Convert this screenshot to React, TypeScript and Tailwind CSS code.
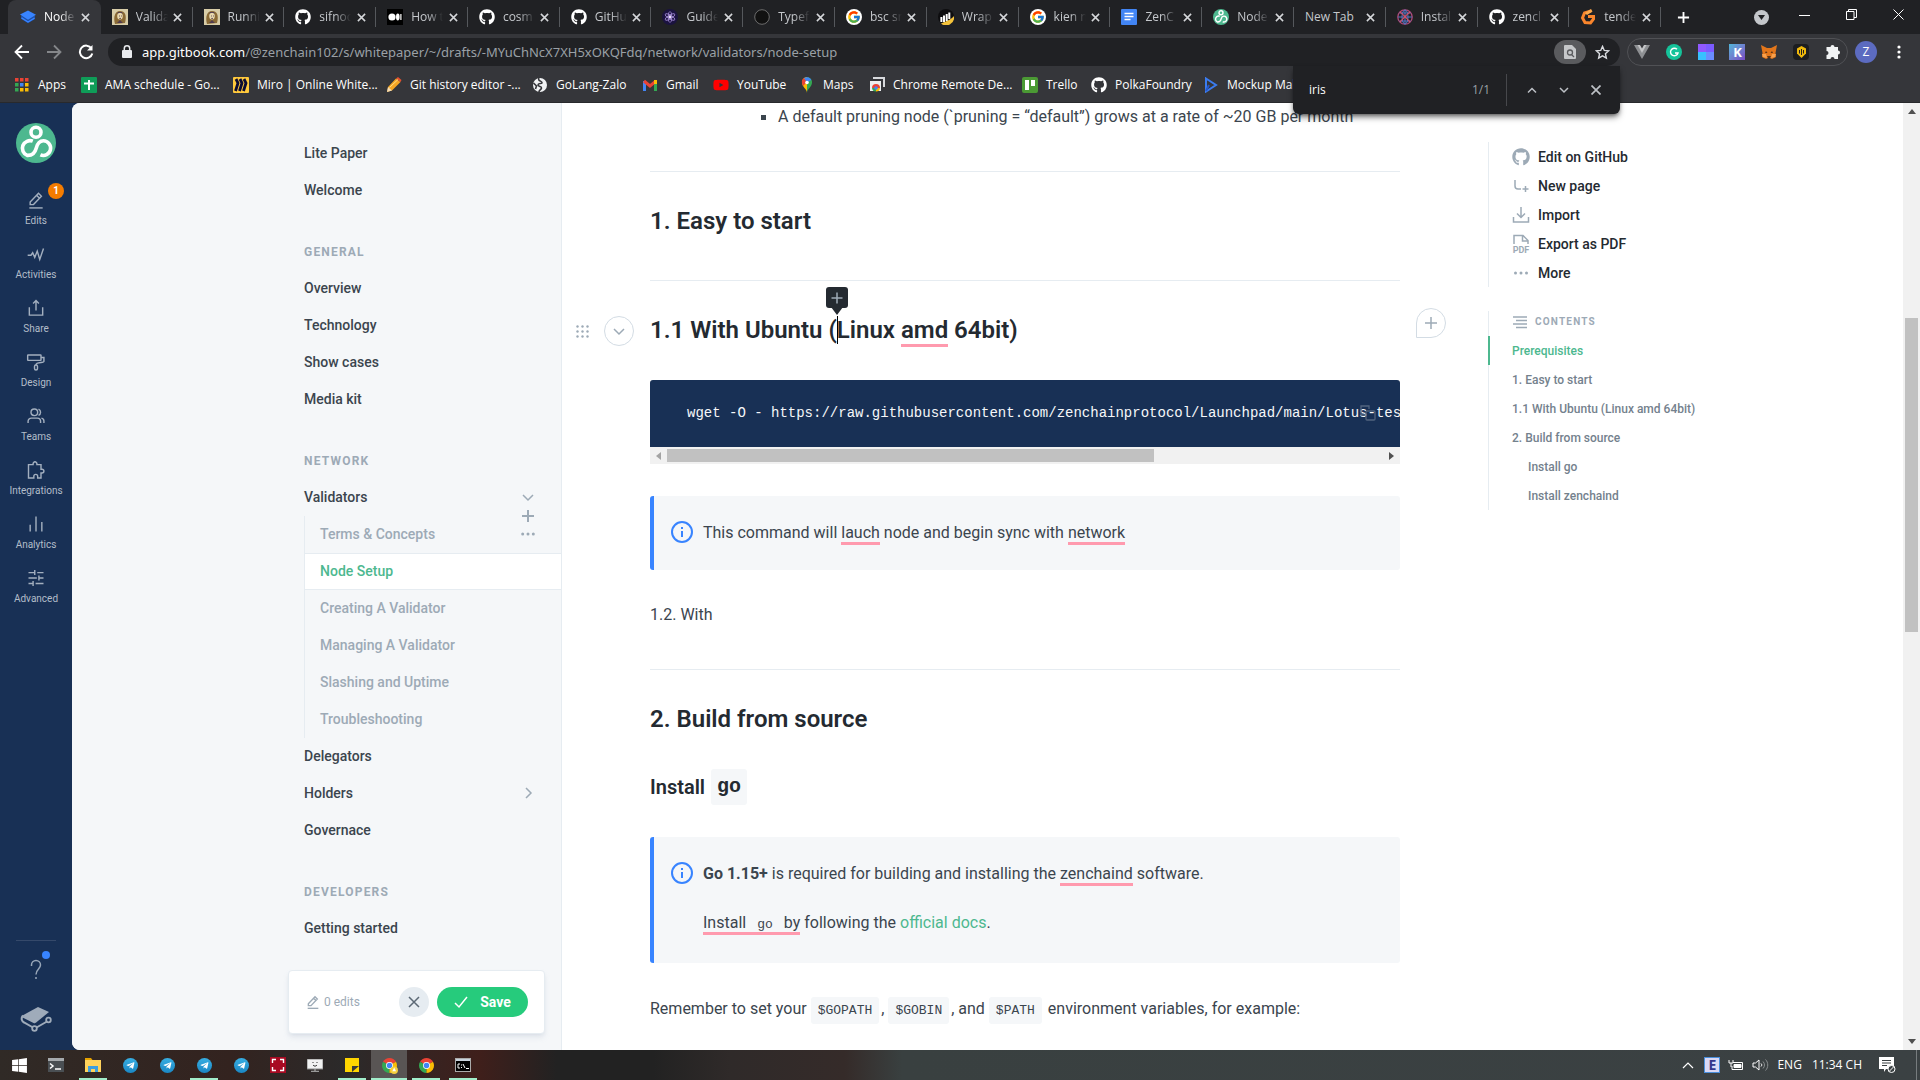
import React from "react";
import { FaGithub, FaTelegramPlane, FaYoutube, FaWindows } from "react-icons/fa";
import { FcGoogle } from "react-icons/fc";

type IconProps = { className?: string };

const svg = (size: number, className: string | undefined, children: React.ReactNode, box = 24, width = 1.5) => (
  <svg width={size} height={size} viewBox={`0 0 ${box} ${box}`} fill="none" stroke="currentColor" strokeWidth={width} className={className} aria-hidden="true">
    {children}
  </svg>
);

const Close = ({ className }: IconProps) => svg(9, className, <path d="M1 1l8 8M9 1L1 9" />, 10, 1.7);

/* ---------- favicons ---------- */

const GitbookFav = () => (
  <svg width="16" height="16" viewBox="0 0 16 16" aria-hidden="true">
    <path d="M1 6.5v3.2L8 14.2l7-4.2V7z" fill="#1d4fa8" />
    <path d="M1.5 8.8L8 13l6.5-3.8" stroke="#3884ff" strokeWidth="1.4" fill="none" />
    <path d="M0 5.5L8 1.5l8 4.2-8 5z" fill="#3884ff" />
  </svg>
);
const Portrait = () => (
  <svg width="16" height="16" viewBox="0 0 16 16" aria-hidden="true">
    <rect width="16" height="16" fill="#d8cda8" />
    <path d="M3 15C1 8 3 2 8 2s7 4 5 12z" fill="#8a6a35" />
    <ellipse cx="8" cy="7" rx="2.8" ry="3.6" fill="#e9d9ae" />
    <path d="M5 6c1-3 5-3 6 0l-1-3H6zM5 14l3-3 3 3z" fill="#513c4e" />
    <path d="M7 7h.8M9 7h.8M7.3 9.4h1.6" stroke="#513c4e" />
  </svg>
);
const Github = () => <FaGithub size={16} className="text-white" />;
const Medium = () => (
  <svg width="16" height="16" viewBox="0 0 16 16" aria-hidden="true">
    <rect width="16" height="16" fill="#000" />
    <circle cx="5" cy="8" r="3.6" fill="#fff" />
    <ellipse cx="10.8" cy="8" rx="1.8" ry="3.4" fill="#fff" />
    <rect x="13.3" y="5" width="1.2" height="6" fill="#fff" />
  </svg>
);
const Cosmos = () => (
  <svg width="16" height="16" viewBox="0 0 16 16" aria-hidden="true">
    <circle cx="8" cy="8" r="8" fill="#1b1340" />
    <g fill="none" stroke="#a58bd8" strokeWidth=".8">
      <ellipse cx="8" cy="8" rx="1.8" ry="5.5" />
      <ellipse cx="8" cy="8" rx="1.8" ry="5.5" transform="rotate(60 8 8)" />
      <ellipse cx="8" cy="8" rx="1.8" ry="5.5" transform="rotate(120 8 8)" />
    </g>
    <circle cx="8" cy="8" r="1.4" fill="#e8defc" />
  </svg>
);
const Ring = () => (
  <svg width="16" height="16" viewBox="0 0 16 16" aria-hidden="true">
    <circle cx="8" cy="8" r="7.3" fill="#111" stroke="#6d6d6d" />
  </svg>
);
const GoogleFav = () => (
  <span className="flex size-4 items-center justify-center rounded-full bg-white">
    <FcGoogle size={14} />
  </span>
);
const Wrap = () => (
  <svg width="16" height="16" viewBox="0 0 16 16" aria-hidden="true">
    <circle cx="8" cy="8" r="8" fill="#0d0d0f" />
    <path d="M3 14.500A8 8 0 0 0 16 7c-2 3-7 5-13 7.500z" fill="#f5c33b" />
    <path d="M3.400 8v5M6 6.500V13M8.700 5v7M11.300 3.500V10" stroke="#fff" strokeWidth="2" />
  </svg>
);
const Docs = () => (
  <svg width="16" height="16" viewBox="0 0 16 16" aria-hidden="true">
    <rect x="0" width="16" height="16" rx="1" fill="#4285f4" />
    <path d="M3.500 4.500h9M3.500 7.500h9M3.500 10.500h6" stroke="#fff" strokeWidth="1.5" />
  </svg>
);
const Zen = ({ size = 16 }: { size?: number }) => (
  <svg width={size} height={size} viewBox="0 0 40 40" aria-hidden="true">
    <circle cx="20" cy="20" r="20" fill="#4db88f" />
    <g fill="none" stroke="#fff" strokeWidth="3.6">
      <circle cx="20" cy="9.3" r="5" />
      <path d="M16.8 18.2a7.6 7.6 0 1 0-5.6 14.2c5.5.3 8-3.4 9-7.2s2.600-7.400 7.200-7.400a7.300 7.300 0 1 1-3 14" />
    </g>
  </svg>
);
const Globe = () => (
  <svg width="16" height="16" viewBox="0 0 16 16" aria-hidden="true" fill="none">
    <circle cx="8" cy="8" r="7.2" stroke="#b04a7a" strokeWidth="1.300" />
    <ellipse cx="8" cy="8" rx="3" ry="7" stroke="#5a79c9" />
    <path d="M1 8h14M2.500 4h11M2.500 12h11M8 1v14" stroke="#5577c4" strokeWidth="1" />
    <path d="M3 3c3 2 7 7 10 10M13 3C10 5 6 10 3 13" stroke="#d1506a" strokeWidth="1.200" />
  </svg>
);
const OrangeG = () => (
  <svg width="16" height="16" viewBox="0 0 16 16" aria-hidden="true">
    <path d="M11 2L4.500 4 2.500 9l2.500 4.500 5.500.500L13.500 10V7.500H8" fill="none" stroke="#f9852c" strokeWidth="3" />
    <path d="M5 4l6-4 1.500 2.500L7 6z" fill="#fba94c" />
  </svg>
);

const tabs: { name: string; icon?: React.ReactNode }[] = [
  { name: "Node", icon: <GitbookFav /> },
  { name: "Valida", icon: <Portrait /> },
  { name: "Runni", icon: <Portrait /> },
  { name: "sifnoc", icon: <Github /> },
  { name: "How t", icon: <Medium /> },
  { name: "cosm", icon: <Github /> },
  { name: "GitHu", icon: <Github /> },
  { name: "Guide", icon: <Cosmos /> },
  { name: "Typef", icon: <Ring /> },
  { name: "bsc sr", icon: <GoogleFav /> },
  { name: "Wrap", icon: <Wrap /> },
  { name: "kien n", icon: <GoogleFav /> },
  { name: "ZenC", icon: <Docs /> },
  { name: "Node", icon: <Zen /> },
  { name: "New Tab" },
  { name: "Instal", icon: <Globe /> },
  { name: "zencl", icon: <Github /> },
  { name: "tende", icon: <OrangeG /> },
];

function TabStrip() {
  return (
    <div className="flex h-[34px] shrink-0 bg-[#202124] pl-2">
      <div className="flex min-w-0 flex-1" role="tablist">
        {tabs.map((t, i) => (
          <div
            key={i}
            role="tab"
            aria-selected={i === 0}
            className={
              i === 0
                ? "flex min-w-0 flex-1 items-center rounded-t-lg bg-[#35363a] pl-3 text-white"
                : "flex min-w-0 flex-1 items-center pl-[11px] text-[#c5c8cc]"
            }
          >
            {t.icon && <span className="mr-2 shrink-0">{t.icon}</span>}
            <span className={t.icon
              ? "w-8 overflow-hidden whitespace-nowrap [mask-image:linear-gradient(to_right,#000_50%,transparent)]"
              : "w-14 whitespace-nowrap"}>
              {t.name}
            </span>
            <button aria-label={`Close ${t.name}`} className="flex flex-1 items-center justify-center pr-1 text-[#d5d7da]">
              <Close />
            </button>
            <span className={i === 0 ? "w-px" : "h-5 w-px bg-[#55585c]"} />
          </div>
        ))}
      </div>
      <div className="flex w-[259px] shrink-0 items-center text-white">
        <button aria-label="New tab" className="ml-4">{svg(13, undefined, <path d="M7 1v12M1 7h12" />, 14, 2)}</button>
        <button aria-label="Search tabs" className="ml-16 flex size-[15px] items-center justify-center rounded-full bg-[#c4c7cb]">
          <svg width="7" height="5" viewBox="0 0 7 5"><path d="M0 0h7L3.500 5z" fill="#202124" /></svg>
        </button>
        <button aria-label="Minimize" className="ml-[30px] mb-1.5"><svg width="11" height="11" viewBox="0 0 11 11"><path d="M0 6.500h11" stroke="#fff" /></svg></button>
        <button aria-label="Restore" className="ml-9 mb-1.5">
          <svg width="11" height="11" viewBox="0 0 11 11" fill="none" stroke="#fff"><path d="M.5 2.500h7.500v8H.5zM2.500 2.500v-2h8v8H8" /></svg>
        </button>
        <button aria-label="Close window" className="ml-9 mb-1.5">
          <svg width="11" height="11" viewBox="0 0 11 11" stroke="#fff"><path d="M.5.5l10 10M10.500.5l-10 10" /></svg>
        </button>
      </div>
    </div>
  );
}

function Toolbar() {
  return (
    <div className="flex h-9 shrink-0 items-center bg-[#35363a] pl-3.5">
      <div className="flex w-[94px] gap-4 text-white">
        <button aria-label="Back">{svg(16, undefined, <path d="M15 8H2M8 1.500L1.500 8 8 14.500" />, 16, 1.8)}</button>
        <button aria-label="Forward" className="text-[#85878a]">{svg(16, undefined, <path d="M1 8h13M8 1.500L14.500 8 8 14.500" />, 16, 1.8)}</button>
        <button aria-label="Reload">{svg(16, undefined, <><path d="M13.500 4.500A6.300 6.300 0 1 0 14.300 9.500" /><path d="M14.500 1v5.500H9z" fill="currentColor" stroke="none" /></>, 16, 2)}</button>
      </div>
      <div className="flex h-7 min-w-0 flex-1 items-center rounded-full bg-[#202124] pl-3.5">
        <svg width="10" height="14" viewBox="0 0 10 14" aria-hidden="true"><rect y="5" width="10" height="8" rx="1" fill="#e8eaed" /><path d="M2.300 5.500V3.500a2.700 2.700 0 0 1 5.400 0v2" stroke="#e8eaed" strokeWidth="1.500" fill="none" /></svg>
        <div className="ml-2.5 flex-1 whitespace-nowrap pt-px font-['Noto_Sans',sans-serif] text-[13px] text-[#9aa0a6]">
          <span className="text-white">app.gitbook.com</span>/@zenchain102/s/whitepaper/~/drafts/-MYuChNcX7XH5xOKQFdq/network/validators/node-setup
        </div>
        <button aria-label="Find in page" className="flex h-6 w-8 items-center justify-center rounded-full bg-[#5a5b5e]">
          <svg width="12" height="14" viewBox="0 0 12 14"><path d="M0 1a1 1 0 0 1 1-1h7l4 4v9a1 1 0 0 1-1 1H1a1 1 0 0 1-1-1z" fill="#c6c8ca" /><circle cx="6" cy="7.500" r="2.500" fill="none" stroke="#5a5b5e" strokeWidth="1.300" /><path d="M7.500 9.500L10 12" stroke="#5a5b5e" strokeWidth="1.300" /></svg>
        </button>
        <button aria-label="Bookmark this tab" className="mr-2.5 ml-[9px] text-[#dadce0]">
          {svg(15, undefined, <path d="M8 1.500l1.900 4.300 4.700.4-3.500 3.100 1 4.600L8 11.500l-4.100 2.400 1-4.600L1.400 6.200l4.700-.4z" />, 16, 1.5)}
        </button>
      </div>
      <div className="mx-[7px] flex h-7 w-[221px] items-center justify-between rounded-full border border-[#505155] px-1.5">
        <svg width="16" height="16" viewBox="0 0 16 16"><path d="M0 1h4l4 7 4-7h4L8 15z" fill="#8e9093" /><path d="M3.500 1H6l2 3.500L10 1h2.500L8 9z" fill="#c4c5c7" /></svg>
        <span className="flex size-4 items-center justify-center rounded-full bg-[#15c39a] text-white">{svg(10, undefined, <path d="M8 2.300A3.800 3.800 0 1 0 9 6H6" />, 10, 1.4)}</span>
        <span className="grid size-4 grid-cols-2"><i className="bg-[#9059ff]" /><i className="bg-[#7b5bff]" /><i className="bg-[#38c0ff]" /><i className="bg-[#6a8dff]" /></span>
        <span className="flex size-4 items-center justify-center bg-linear-to-br from-[#4db6d8] to-[#7747c4] text-[13px] leading-4 font-bold text-white">K</span>
        <svg width="16" height="16" viewBox="0 0 16 16"><path d="M0 1l6 3h4l6-3-1.500 8 .5 4-4 2-2-1H7l-2 1-4-2 .5-4z" fill="#e2761b" /><path d="M5 7l1.500 2H4zM11 7L9.500 9H12zM6 12h4l-1 2H7z" fill="#5b3416" /><path d="M1 10h4l1 4-4-1zM15 10h-4l-1 4 4-1z" fill="#f6a04d" /></svg>
        <span className="flex size-4 items-center justify-center rounded bg-[#1c1d20]"><svg width="11" height="12" viewBox="0 0 11 12"><path d="M5.500 0L10 2.500v5L5.500 12 1 7.500v-5z" fill="#f0b90b" /><path d="M3.500 4v3.500M5.500 3v6M7.500 4v3.500" stroke="#1c1d20" /></svg></span>
        <svg width="16" height="16" viewBox="0 0 16 16"><path d="M5.500 3a2 2 0 0 1 4 0H13v3.500a2 2 0 0 1 0 4V15H9.500a2 2 0 0 0-4 0H1.500v-4a2 2 0 0 0 0-4V3z" fill="#f1f3f4" /></svg>
      </div>
      <button aria-label="Profile" className="flex size-[22px] items-center justify-center rounded-full bg-[#5c6bc0] text-xs text-white">Z</button>
      <button aria-label="Menu" className="mr-[19px] ml-5 text-white"><svg width="4" height="14" viewBox="0 0 4 14" fill="currentColor"><circle cx="2" cy="2" r="1.600" /><circle cx="2" cy="7" r="1.600" /><circle cx="2" cy="12" r="1.600" /></svg></button>
    </div>
  );
}

const appColors = ["#ea4335", "#ea4335", "#ea4335", "#34a853", "#4285f4", "#fbbc05", "#34a853", "#fbbc05", "#fbbc05"];

const bookmarks: { label: string; width: string; icon: React.ReactNode }[] = [
  { label: "Apps", width: "w-[67px]", icon: <svg width="16" height="16" viewBox="0 0 16 16">{appColors.map((c, i) => <rect key={i} x={1 + (i % 3) * 5} y={1 + Math.floor(i / 3) * 5} width="3.500" height="3.500" fill={c} />)}</svg> },
  { label: "AMA schedule - Go...", width: "w-[152px]", icon: <svg width="16" height="16" viewBox="0 0 16 16"><rect width="16" height="16" rx="1" fill="#0f9d58" /><path d="M8 3v10M3 6.500h10" stroke="#fff" strokeWidth="2" /></svg> },
  { label: "Miro | Online White...", width: "w-[153px]", icon: <svg width="16" height="16" viewBox="0 0 16 16"><rect width="16" height="16" rx="1" fill="#ffc93c" /><path d="M3 2l2 4-2.500 8M7 2l2 4-2.500 8M11 2l2 4-2.500 8" stroke="#0b0b33" strokeWidth="2.800" fill="none" /></svg> },
  { label: "Git history editor -...", width: "w-[146px]", icon: <svg width="16" height="16" viewBox="0 0 16 16"><path d="M1 15l1-5 8-8.500L14.500 5 6 13.500z" fill="#f6a623" /><path d="M1 15l1-5 4 3.500z" fill="#f3dcb8" /><path d="M10 1.500l2-1.500 3.500 3-1 2z" fill="#e3512f" /><path d="M3.500 10.500L12 2.500" stroke="#ffe08a" /></svg> },
  { label: "GoLang-Zalo", width: "w-[110px]", icon: <svg width="16" height="16" viewBox="0 0 16 16"><circle cx="8" cy="8" r="7" fill="#f1f3f4" /><path d="M7 1c-2 3 4 3 3 5-1 1-4 0-4 2s4 1 3.500 3S7 13 7 15M1.500 6l3 3-1 3" stroke="#35363a" strokeWidth="1.600" fill="none" /></svg> },
  { label: "Gmail", width: "w-[71px]", icon: <svg width="16" height="16" viewBox="0 0 16 16" fill="none" strokeWidth="3"><path d="M2.500 14V4" stroke="#4285f4" /><path d="M13.500 14V4" stroke="#34a853" /><path d="M2 4l6 5 6-5" stroke="#ea4335" /><path d="M13.500 7V3" stroke="#fbbc04" /></svg> },
  { label: "YouTube", width: "w-[86px]", icon: <FaYoutube size={16} className="text-[#ff0000]" /> },
  { label: "Maps", width: "w-[70px]", icon: <svg width="16" height="16" viewBox="0 0 16 16"><path d="M8 16c0-4-5-6-5-10.500A5 5 0 0 1 8 0z" fill="#fbbc04" /><path d="M8 16c0-4 5-6 5-10.500A5 5 0 0 0 8 0z" fill="#34a853" /><path d="M3 6a5 5 0 0 1 2-5l3 4-4 4z" fill="#ea4335" /><path d="M5 1a5 5 0 0 1 7.300 2L8 5.500z" fill="#4285f4" /><circle cx="8" cy="5.500" r="1.800" fill="#fff" /></svg> },
  { label: "Chrome Remote De...", width: "w-[153px]", icon: <svg width="16" height="16" viewBox="0 0 16 16"><path d="M4 1h11v9" stroke="#d7d9dc" strokeWidth="2" fill="none" /><rect x="1" y="4" width="11" height="10" fill="#eceef0" /><path d="M3 11a4 4 0 0 1 8 0z" fill="#ea4335" /><path d="M3 11h4v3.500A4 4 0 0 1 3 11z" fill="#34a853" /><path d="M11 11H7v3.500a4 4 0 0 0 4-3.500z" fill="#fbbc04" /><circle cx="7" cy="11" r="1.800" fill="#4285f4" /></svg> },
  { label: "Trello", width: "w-[69px]", icon: <svg width="16" height="16" viewBox="0 0 16 16"><rect width="16" height="16" rx="2" fill="#4b9a34" /><rect x="3" y="3" width="4" height="10" fill="#fff" /><rect x="9" y="3" width="4" height="6" fill="#fff" /></svg> },
  { label: "PolkaFoundry", width: "w-[112px]", icon: <Github /> },
  { label: "Mockup Maker", width: "w-[120px]", icon: <svg width="16" height="16" viewBox="0 0 16 16" fill="none"><path d="M3 1.500L13 8 3 14.500z" stroke="#3b7cf0" strokeWidth="2" /><path d="M3 14l3-6" stroke="#2557c9" strokeWidth="2" /></svg> },
];

function Bookmarks() {
  return (
    <div className="flex h-[33px] shrink-0 items-center border-b border-[#28292c] bg-[#35363a] pb-[3px] pl-3.5 text-white">
      {bookmarks.map((b) => (
        <a key={b.label} href="#" className={"flex shrink-0 items-center gap-2 whitespace-nowrap " + b.width}>
          <span className="shrink-0">{b.icon}</span>
          {b.label}
        </a>
      ))}
    </div>
  );
}

function FindBar() {
  return (
    <div className="absolute top-[66px] right-[300px] z-20 flex h-12 w-[327px] items-center rounded-b-md bg-[#202124] pl-4 text-[#bdc1c6] shadow-md shadow-black/50">
      <input aria-label="Find" defaultValue="iris" className="w-0 flex-1 bg-transparent text-white outline-none" />
      <span className="text-[#9aa0a6]">1/1</span>
      <span className="ml-4 h-8 w-px bg-[#47484c]" />
      <button aria-label="Previous" className="ml-5">{svg(10, undefined, <path d="M1 7.500l4-4 4 4" />, 10, 1.5)}</button>
      <button aria-label="Next" className="ml-[22px]">{svg(10, undefined, <path d="M1 3l4 4 4-4" />, 10, 1.5)}</button>
      <button aria-label="Close find bar" className="mr-[19px] ml-[22px]">{svg(10, undefined, <path d="M.500.500l9 9M9.500.500l-9 9" />, 10, 1.7)}</button>
    </div>
  );
}

/* ---------- left rail ---------- */

const penPaths = <><path d="M5 14.500L15 4l3.500 3.500L9 17.500H5zM13 6.500L16 9.500" /><path d="M4 21.500h16" /></>;

const rail: { label: string; icon: React.ReactNode }[] = [
  { label: "Edits", icon: penPaths },
  { label: "Activities", icon: <path d="M2 13.500h4l2-3 2.500 5.500 3-7.500L16.500 18.500 21 5.500" /> },
  { label: "Share", icon: <path d="M8.500 6.500L12 3l3.500 3.500M12 3v12M4 11v9.500h16V11" /> },
  { label: "Design", icon: <><rect x="2" y="3.500" width="16" height="6.500" rx=".5" /><path d="M18 6.500h3.500v5c0 2-9.500 0-9.500 4" /><rect x="10.200" y="15.500" width="3.600" height="6" rx="1.800" /></> },
  { label: "Teams", icon: <><circle cx="10" cy="7.500" r="4" /><path d="M15 3.800a4 4 0 0 1 0 7.400M2.500 20.500v-2a4 4 0 0 1 4-4h7a4 4 0 0 1 4 4v2M18.500 14.500a3.500 3.500 0 0 1 3 3.500v2.500" /></> },
  { label: "Integrations", icon: <path d="M3 5.500h5.500V4.500a2.300 2.300 0 1 1 4.600 0v1H18v5.500h1.200a2.300 2.300 0 1 1 0 4.600H18v5.900h-4v-2a2.300 2.300 0 0 0-4.600 0v2H3z" /> },
  { label: "Analytics", icon: <path d="M5 13v8M12 3v18M19 9.500V21" /> },
  { label: "Advanced", icon: <path d="M3 5.500h7M13.500 5.500H21M10.500 2.500v6M3 12h10M16 12h5M15.500 9v6M3 18.500h5M11.500 18.500H21M8.500 15.500v6" /> },
];

function Rail() {
  return (
    <aside className="flex w-[72px] shrink-0 flex-col items-center pt-5 text-[#a3afbf]">
      <Zen size={40} />
      <nav className="mt-[21px] flex w-full flex-col">
        {rail.map((r, i) => (
          <button key={r.label} className="relative flex h-[54px] flex-col items-center pt-[5px] text-[10px] leading-3">
            {svg(20, "my-px", r.icon, 24, 1.7)}
            <span className="mt-1 text-[#b3bdc9]">{r.label}</span>
            {i === 0 && <span className="absolute -top-px right-2 flex size-4 items-center justify-center rounded-full bg-[#f57c00] font-bold text-white">1</span>}
          </button>
        ))}
      </nav>
      <div className="mt-auto w-10 border-t border-[#35496a]" />
      <button aria-label="Help" className="relative mt-[17px] mb-[23px] text-[#98a6b8]">
        {svg(24, undefined, <><path d="M7.500 8V7a4.500 4.500 0 0 1 9 0c0 4-4.500 4-4.500 9.500" /><path d="M12 19v2" /></>, 24, 1.5)}
        <span className="absolute -top-[7px] -right-0.5 size-2 rounded-full bg-[#3884ff]" />
      </button>
      <svg width="32" height="28" viewBox="0 0 32 28" className="mb-[17px]" aria-hidden="true">
        <path d="M2.500 10.500L18 2l11 5-13.500 11z" fill="#9fabba" />
        <path d="M3 10.500c-2.500 3-1 6 1 7l9 5M16.500 22.500L27 16.500" fill="none" stroke="#9fabba" strokeWidth="2" />
        <path d="M3 11.500l12 6" stroke="#9fabba" strokeWidth="2" />
        <circle cx="14.500" cy="23.500" r="2.300" fill="#183055" stroke="#9fabba" strokeWidth="1.800" />
        <circle cx="28.500" cy="15" r="2.300" fill="#183055" stroke="#9fabba" strokeWidth="1.800" />
      </svg>
    </aside>
  );
}

/* ---------- page navigation ---------- */

const NavItem = ({ children, after }: { children: React.ReactNode; after?: React.ReactNode }) => (
  <div className="flex h-[37px] items-center justify-between pr-[26px] pb-0.5">
    <a href="#">{children}</a>
    {after}
  </div>
);
const NavTitle = ({ children }: { children: React.ReactNode }) => (
  <h4 className="mt-6 flex h-[37px] items-center text-xs font-bold tracking-[1.2px] text-[#9daab6]">{children}</h4>
);

function Sidebar() {
  return (
    <div className="relative w-[490px] shrink-0 overflow-hidden rounded-l-lg border-r border-[#e6ecf1] bg-[#f5f7f9] pt-8 pl-[232px] text-sm font-medium text-[#3b454e]">
      <NavItem>Lite Paper</NavItem>
      <NavItem>Welcome</NavItem>
      <NavTitle>GENERAL</NavTitle>
      <NavItem>Overview</NavItem>
      <NavItem>Technology</NavItem>
      <NavItem>Show cases</NavItem>
      <NavItem>Media kit</NavItem>
      <NavTitle>NETWORK</NavTitle>
      <div className="relative">
        <NavItem after={<button aria-label="Collapse" className="text-[#9daab6]">{svg(14, undefined, <path d="M2 5l5 5 5-5" />, 14)}</button>}>Validators</NavItem>
        <div className="absolute top-[30px] right-[26px] z-10 flex flex-col items-center gap-1 text-[#9daab6]">
          <button aria-label="Add page">{svg(14, undefined, <path d="M7 1v12M1 7h12" />, 14, 2)}</button>
          <button aria-label="Page options"><svg width="14" height="14" viewBox="0 0 14 14" fill="currentColor"><circle cx="1.700" cy="7" r="1.500" /><circle cx="7" cy="7" r="1.500" /><circle cx="12.300" cy="7" r="1.500" /></svg></button>
        </div>
        <ul className="border-l border-[#e6ecf1] text-[#9daab6]">
          {["Terms & Concepts", "Node Setup", "Creating A Validator", "Managing A Validator", "Slashing and Uptime", "Troubleshooting"].map((t) => (
            <li key={t} className={t === "Node Setup" ? "flex h-[37px] items-center border-y border-[#e6ecf1] bg-white pb-0.5 pl-[15px] text-[#4db88f]" : "flex h-[37px] items-center pb-0.5 pl-[15px]"}>
              <a href="#">{t}</a>
            </li>
          ))}
        </ul>
      </div>
      <NavItem>Delegators</NavItem>
      <NavItem after={<button aria-label="Expand" className="text-[#9daab6]">{svg(14, undefined, <path d="M5 2l5 5-5 5" />, 14)}</button>}>Holders</NavItem>
      <NavItem>Governace</NavItem>
      <NavTitle>DEVELOPERS</NavTitle>
      <NavItem>Getting started</NavItem>
      <div className="absolute right-4 bottom-4 flex h-16 w-[257px] items-center rounded border border-[#e6ecf1] bg-white px-4 font-normal shadow-md shadow-slate-400/20">
        <span className="flex flex-1 items-center gap-[3px] text-xs text-[#9daab6]">
          {svg(16, undefined, penPaths, 24, 2)} 0 edits
        </span>
        <button aria-label="Discard" className="mr-2 flex size-[30px] items-center justify-center rounded-full bg-[#e6ecf1] text-[#5c6975]">{svg(12, undefined, <path d="M1 1l10 10M11 1L1 11" />, 12)}</button>
        <button className="flex h-[30px] w-[91px] items-center justify-center gap-3 rounded-full bg-[#26cb7c] font-bold text-white">
          {svg(14, undefined, <path d="M1 8l4 4 8-10" />, 14)} Save
        </button>
      </div>
    </div>
  );
}

/* ---------- document ---------- */

const Miss = ({ children }: { children: React.ReactNode }) => <span className="border-b-[3px] border-[#ff9aae]">{children}</span>;
const Code = ({ children }: { children: React.ReactNode }) => (
  <code className="mr-0.5 rounded-[3px] bg-[#f5f7f9] px-[7px] py-1.5 font-['Liberation_Mono',monospace] text-[13px]">{children}</code>
);
const Callout = ({ children }: { children: React.ReactNode }) => (
  <div className="mt-8 flex gap-2.5 rounded-[3px] border-l-4 border-[#3884ff] bg-[#f5f7f9] py-6 pl-[17px]">
    <svg width="22" height="26" viewBox="0 0 22 26" className="shrink-0" fill="none" stroke="#3884ff" strokeWidth="2" aria-hidden="true">
      <circle cx="11" cy="12" r="10" />
      <path d="M11 11v6M11 7v2" />
    </svg>
    <div>{children}</div>
  </div>
);
const Rule = () => <hr className="mt-[41px] border-[#e6ecf1]" />;

function Document() {
  return (
    <article className="min-w-0 flex-1 pt-px text-base leading-[26px] text-[#3b454e]">
      <ul className="pl-[111px]">
        <li className="flex h-[26px] items-center gap-3"><span className="size-[5px] bg-[#3b454e]" />A default pruning node (`pruning = “default”) grows at a rate of ~20 GB per month</li>
      </ul>
      <Rule />
      <h2 className="mt-[31px] text-2xl leading-9 font-semibold text-[#242a31]">1. Easy to start</h2>
      <Rule />
      <div className="relative mt-[31px]">
        <div className="absolute top-1 -left-[74px] flex items-center gap-[15px] text-[#9daab6]">
          <button aria-label="Move block">
            <svg width="13" height="13" viewBox="0 0 13 13" fill="currentColor">{[0, 1, 2, 3, 4, 5, 6, 7, 8].map((i) => <circle key={i} cx={1.5 + (i % 3) * 5} cy={1.5 + Math.floor(i / 3) * 5} r="1.200" />)}</svg>
          </button>
          <button aria-label="Block options" className="flex size-[30px] items-center justify-center rounded-full border border-[#d3dce4]">{svg(12, undefined, <path d="M1 4l5 5 5-5" />, 12)}</button>
        </div>
        <h2 className="text-2xl leading-9 font-semibold text-[#242a31]">
          1.1 With Ubuntu (
          <span className="relative inline-block h-0 w-0 align-baseline">
            <span className="absolute -top-[22px] left-0 h-7 w-px bg-black" />
            <button aria-label="Insert" className="absolute -top-[51px] -left-[11px]">
              <svg width="22" height="28" viewBox="0 0 22 28"><rect width="22" height="21" rx="3" fill="#242a31" /><path d="M5 20h12l-6 8z" fill="#242a31" /><path d="M11 5.500v11M5.500 11h11" stroke="#9daab6" strokeWidth="1.500" /></svg>
            </button>
          </span>
          Linux <Miss>amd</Miss> 64bit)
        </h2>
        <button aria-label="Comment" className="absolute -top-1 -right-[46px] flex size-[30px] items-center justify-center rounded-full rounded-bl-none border border-[#d3dce4] text-[#9daab6]">{svg(12, undefined, <path d="M6 0v12M0 6h12" />, 12)}</button>
      </div>
      <div className="relative mt-8 overflow-hidden rounded-t-[3px]">
        <pre className="h-[67px] overflow-hidden bg-[#183055] pl-[37px] font-['Liberation_Mono',monospace] text-sm leading-[67px] text-[#f5f7f9]">wget -O - https://raw.githubusercontent.com/zenchainprotocol/Launchpad/main/Lotus-testnet/install.sh</pre>
        <button aria-label="Copy" className="absolute top-[25px] right-6 text-[#52647f]">{svg(16, undefined, <><path d="M5 10H1V1h8v3" /><rect x="6" y="6" width="9" height="9" rx="1" /></>, 16, 1.3)}</button>
        <div className="flex h-[17px] items-center justify-between bg-[#f1f1f1] px-1.5">
          <svg width="5" height="8" viewBox="0 0 5 8"><path d="M5 0v8L0 4z" fill="#a3a3a3" /></svg>
          <div className="mx-1.5 h-[13px] flex-1"><div className="h-full w-[68%] bg-[#c1c1c1]" /></div>
          <svg width="5" height="8" viewBox="0 0 5 8"><path d="M0 0v8l5-4z" fill="#505050" /></svg>
        </div>
      </div>
      <Callout><p>This command will <Miss>lauch</Miss> node and begin sync with <Miss>network</Miss></p></Callout>
      <p className="mt-8">1.2. With</p>
      <Rule />
      <h2 className="mt-[31px] text-2xl leading-9 font-semibold text-[#242a31]">2. Build from source</h2>
      <h3 className="mt-8 flex text-xl leading-9 font-semibold text-[#242a31]">
        Install <code className="ml-1.5 rounded-[3px] bg-[#f5f7f9] px-1.5 font-['Liberation_Mono',monospace] font-bold">go</code>
      </h3>
      <Callout>
        <p><strong>Go 1.15+</strong> is required for building and installing the <Miss>zenchaind</Miss> software.</p>
        <p className="mt-[22px] leading-7"><Miss>Install<code className="mx-[11px] font-['Liberation_Mono',monospace] text-[13px]">go</code>by</Miss> following the <a href="#" className="text-[#4db88f]">official docs</a>.</p>
      </Callout>
      <p className="mt-8 leading-7">Remember to set your <Code>$GOPATH</Code>, <Code>$GOBIN</Code>, and <Code>$PATH</Code> environment variables, for example:</p>
    </article>
  );
}

const actions: { label: string; icon: React.ReactNode }[] = [
  { label: "Edit on GitHub", icon: <FaGithub size={18} /> },
  { label: "New page", icon: svg(18, undefined, <><path d="M3 3v6a3 3 0 0 0 3 3h3M13.500 9v6M10.500 12h6" /></>, 18) },
  { label: "Import", icon: svg(18, undefined, <path d="M9 1v10M5 7.500L9 11.500l4-4M1.500 11v5h15v-5" />, 18) },
  {
    label: "Export as PDF",
    icon: (
      <svg width="18" height="20" viewBox="0 0 18 20" fill="none" stroke="currentColor" strokeWidth="1.500" aria-hidden="true">
        <path d="M2 10V1.500h9l5 5V10M10.500 1.500V7H16" />
        <text x="9" y="19" textAnchor="middle" fontSize="9" fontWeight="700" fill="currentColor" stroke="none">PDF</text>
      </svg>
    ),
  },
  { label: "More", icon: <svg width="18" height="18" viewBox="0 0 18 18" fill="currentColor"><circle cx="3.500" cy="9" r="1.500" /><circle cx="9" cy="9" r="1.500" /><circle cx="14.500" cy="9" r="1.500" /></svg> },
];

function Outline() {
  return (
    <aside className="w-[415px] shrink-0 pt-[39px] font-medium">
      <div className="border-l border-[#e6ecf1] pl-[23px]">
        {actions.map((a) => (
          <button key={a.label} className="flex h-[29px] w-full items-center gap-2 text-sm text-[#242a31]">
            <span className="w-[18px] text-[#9daab6]">{a.icon}</span>
            {a.label}
          </button>
        ))}
      </div>
      <nav className="mt-6 border-l border-[#e6ecf1] text-xs text-[#74818d]">
        <h4 className="flex h-[25px] items-center gap-2 pb-1 pl-6 text-[10px] font-bold tracking-[1.2px] text-[#9daab6]">
          {svg(14, undefined, <path d="M0 2h14M3 5.500h11M0 9h14M3 12.500h11" />, 14)}
          CONTENTS
        </h4>
        <a href="#" className="-ml-px flex h-[29px] items-center border-l-2 border-[#4db88f] pl-[22px] text-[#4db88f]">Prerequisites</a>
        <a href="#" className="flex h-[29px] items-center pl-[23px]">1. Easy to start</a>
        <a href="#" className="flex h-[29px] items-center pl-[23px]">1.1 With Ubuntu (Linux amd 64bit)</a>
        <a href="#" className="flex h-[29px] items-center pl-[23px]">2. Build from source</a>
        <a href="#" className="flex h-[29px] items-center pl-[39px]">Install go</a>
        <a href="#" className="flex h-[29px] items-center pl-[39px]">Install zenchaind</a>
      </nav>
    </aside>
  );
}

function PageScrollbar() {
  return (
    <div className="flex w-[17px] shrink-0 flex-col items-center bg-[#f1f1f1] py-1.5">
      <svg width="8" height="5" viewBox="0 0 8 5"><path d="M0 5h8L4 0z" fill="#505050" /></svg>
      <div className="flex w-full flex-1 flex-col px-0.5">
        <div className="basis-[22%]" />
        <div className="basis-[34%] bg-[#c1c1c1]" />
      </div>
      <svg width="8" height="5" viewBox="0 0 8 5"><path d="M0 0h8L4 5z" fill="#505050" /></svg>
    </div>
  );
}

/* ---------- taskbar ---------- */

const Telegram = () => (
  <span className="flex size-[15px] items-center justify-center rounded-full bg-linear-to-b from-[#37aee2] to-[#1a87c4]"><FaTelegramPlane size={9} className="text-white" /></span>
);
const Chrome = ({ badge }: { badge?: boolean }) => (
  <svg width="15" height="15" viewBox="0 0 16 16" aria-hidden="true" className="overflow-visible">
    <path d="M8 8L1.100 4a8 8 0 0 1 13.800 0z" fill="#ea4335" />
    <path d="M8 8L1.100 4A8 8 0 0 0 8 16z" fill="#34a853" />
    <path d="M8 8l6.900-4A8 8 0 0 1 8 16z" fill="#fbbc05" />
    <circle cx="8" cy="8" r="3.700" fill="#fff" />
    <circle cx="8" cy="8" r="2.900" fill="#4285f4" />
    {badge && <><circle cx="13" cy="13" r="4" fill="#f4d03f" /><path d="M13 10l2 4h-4z" fill="#fff" /></>}
  </svg>
);

const tasks: { name: string; icon: React.ReactNode; state?: "open" | "active" }[] = [
  { name: "Start", icon: <FaWindows size={17} className="text-white" /> },
  { name: "Terminal", icon: <svg width="16" height="14" viewBox="0 0 16 14"><rect width="16" height="14" fill="#4a4f53" /><rect width="16" height="3" fill="#a6aaad" /><path d="M2 5.500l3 2.500-3 2.500M7 11h6" stroke="#fff" strokeWidth="1.500" fill="none" /></svg> },
  { name: "Explorer", state: "open", icon: <svg width="16" height="14" viewBox="0 0 16 14"><path d="M0 0h6l1.500 2H0z" fill="#e6a200" /><rect y="2" width="16" height="12" fill="#ffd35c" /><path d="M3 14V8h10v6h-3v-3H6v3z" fill="#3d9fe0" /></svg> },
  { name: "Telegram 1", icon: <Telegram /> },
  { name: "Telegram 2", icon: <Telegram /> },
  { name: "Telegram 3", state: "open", icon: <Telegram /> },
  { name: "Telegram 4", icon: <Telegram /> },
  { name: "Capture", icon: <svg width="16" height="16" viewBox="0 0 16 16"><rect width="16" height="16" fill="#a80a22" /><path d="M2.500 6V2.500H6M10 2.500h3.500V6M13.500 10v3.500H10M6 13.500H2.500V10" stroke="#fff" strokeWidth="1.400" fill="none" /></svg> },
  { name: "Display", icon: <svg width="16" height="13" viewBox="0 0 16 13"><rect width="16" height="10" fill="#f1f1f1" stroke="#888" /><path d="M8 10v3M4 12.500h8" stroke="#999" strokeWidth="1.500" /><path d="M6 3v1M10 3v1M6 6c1 1.500 3 1.500 4 0" stroke="#333" fill="none" /></svg> },
  { name: "Notes", state: "open", icon: <svg width="14" height="14" viewBox="0 0 14 14"><path d="M0 0h14v14H0z" fill="#ffd600" /><path d="M7 14V8h7z" fill="#3a3a3a" /></svg> },
  { name: "Chrome profile", state: "active", icon: <Chrome badge /> },
  { name: "Chrome", state: "open", icon: <Chrome /> },
  { name: "Command prompt", state: "open", icon: <svg width="16" height="14" viewBox="0 0 16 14"><rect x=".5" y=".5" width="15" height="13" fill="#000" stroke="#aaa" /><rect x="1" y="1" width="14" height="2" fill="#c9d3dd" /><path d="M5 6H3v4h2M6.500 6.500v1M6.500 9v1M8 6l2 4M11 10.500h3" stroke="#fff" fill="none" /></svg> },
];

function Taskbar() {
  return (
    <footer className="flex h-[30px] shrink-0 items-stretch bg-[linear-gradient(to_right,#302a26,#33231f_12%,#2b2a2a_18%,#3f1f1b_25%,#222222_29%,#222222_34%,#2f2a29_38%,#352b29_44%,#394040_47%,#3b4143)] pl-px text-xs text-white">
      {tasks.map((t) => (
        <button
          key={t.name}
          aria-label={t.name}
          className={t.state === "active" ? "relative mr-px flex w-9 items-center justify-center bg-[#595554]" : "relative mr-px flex w-9 items-center justify-center"}
        >
          {t.icon}
          {t.state && <span className={t.state === "active" ? "absolute inset-x-0 bottom-0 h-0.5 bg-[#a2eecb]" : "absolute inset-x-1 bottom-0 h-0.5 bg-[#a2eecb]"} />}
        </button>
      ))}
      <div className="ml-auto flex items-center pr-[3px]">
        {svg(12, undefined, <path d="M1 9l5-5 5 5" />, 12, 1.2)}
        <span className="ml-2.5 flex size-4 items-center justify-center border border-[#4a8fdc] bg-[#d9d8f5] text-sm leading-3 font-bold text-[#34358c]">E</span>
        <svg width="16" height="12" viewBox="0 0 16 12" className="ml-2" fill="none" stroke="#fff"><path d="M5 3.500h9.500v7H4V7M1 1v3h4V1M3 4v4" /><path d="M6 5.500h7v3H6z" fill="#fff" /></svg>
        <svg width="17" height="14" viewBox="0 0 17 14" className="ml-2" fill="none" stroke="#fff"><path d="M1 5v4h2.500L7 12V2L3.500 5z" /><path d="M9 5.500c1 1 1 2 0 3" /><path d="M11 3.500c2 2 2 5 0 7M13.500 1.500c3 3 3 8 0 11" stroke="#8a8f90" /></svg>
        <span className="ml-2">ENG</span>
        <span className="ml-2.5">11:34 CH</span>
        <svg width="17" height="16" viewBox="0 0 17 16" className="ml-[17px]"><path d="M0 0h15v12H7l-2 3v-3H0z" fill="#fff" /><path d="M3 3.500h9M3 6h9M3 8.500h5" stroke="#3b4143" /><circle cx="12.500" cy="12" r="3.500" fill="#3b4143" stroke="#fff" /><path d="M10 14.500l5-5" stroke="#fff" /></svg>
        <span className="ml-5 h-[30px] w-px bg-[#777c7e]" />
      </div>
    </footer>
  );
}

export default function App() {
  return (
    <div className="relative flex h-screen flex-col overflow-hidden bg-white font-['Open_Sans','Noto_Sans',sans-serif] text-xs">
      <TabStrip />
      <Toolbar />
      <Bookmarks />
      <FindBar />
      <div className="flex min-h-0 flex-1 overflow-hidden bg-[#183055] font-[Roboto,sans-serif]">
        <Rail />
        <div className="flex min-w-0 flex-1 rounded-l-lg bg-white">
          <Sidebar />
          <main className="flex min-w-0 flex-1 overflow-hidden px-[88px]">
            <Document />
          </main>
          <Outline />
        </div>
        <PageScrollbar />
      </div>
      <Taskbar />
    </div>
  );
}
